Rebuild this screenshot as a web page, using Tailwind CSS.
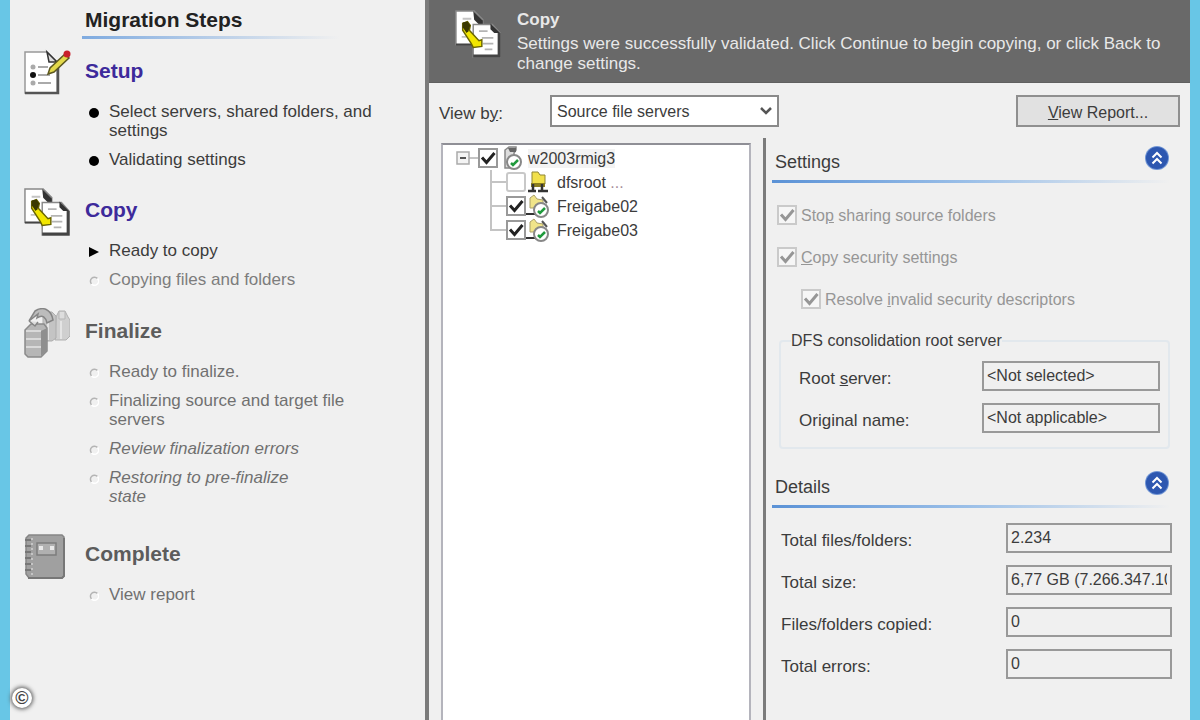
<!DOCTYPE html>
<html lang="en">
<head>
    <meta charset="UTF-8">
    <meta name="viewport" content="width=device-width, initial-scale=1.0">
    <title>File Server Migration - Copy</title>
    <script src="https://cdn.jsdelivr.net/npm/@tailwindcss/browser@4"></script>
</head>
<body class="min-h-screen flex bg-[#f0f0f0] border-x-[10px] border-[#68c6e6] font-['Liberation_Sans',Arial,sans-serif] text-[17px] leading-[19px] text-[#3c3c3c]">
    <!-- Shared icons -->
    <svg class="hidden">
        <symbol id="copyIcon" viewBox="0 0 48 50">
            <path d="M1 1h19l9 9v26H1z" fill="#fff" stroke="#888" stroke-width="1.500"/>
            <path d="M1 36h20" stroke="#444" stroke-width="2"/>
            <path d="M19 1l10 10v4h-4l-5-5z" fill="#333"/>
            <path d="M8 9h9M7 28h5M20 18h5" stroke="#c4c4c4" stroke-width="2"/>
            <path d="M19 15h20l8 9v25H19z" fill="#fff" stroke="#888" stroke-width="1.500"/>
            <path d="M19 48h27V24" fill="none" stroke="#444" stroke-width="3"/>
            <path d="M37 14l10 10h-6l-4-4z" fill="#333"/>
            <path d="M25 22h9M28 29h12M29 35h11M31 41h8" stroke="#b4b4b4" stroke-width="2"/>
            <path d="M8 14l5-2 3 4-1 5 10 11 3-1v7l-9 1-2-4L8 21z" fill="#f2e600" stroke="#6a6500" stroke-width="1.500"/>
            <path d="M8 13l5-1 3 4-2 6-2 2-4-6z" fill="#3a3800"/>
        </symbol>
        <symbol id="shareIcon" viewBox="0 0 24 24">
            <path d="M4 4l4-3 3 4 6 1v8H4z" fill="#f0e48a" stroke="#aaa06a"/>
            <path d="M0 20h10" stroke="#333" stroke-width="2"/>
            <path d="M16 3l5 6" stroke="#555" stroke-width="2"/>
            <circle cx="15" cy="16" r="7" fill="#fff" stroke="#888" stroke-width="2"/>
            <path d="M12 17l2 2 5-5" fill="none" stroke="#1f9a3c" stroke-width="2.500"/>
        </symbol>
        <symbol id="collapseIcon" viewBox="0 0 26 26">
            <circle cx="13" cy="13" r="12" fill="#6f94d4"/>
            <circle cx="13" cy="13" r="11" fill="#2d57b0"/>
            <path d="M8.500 12.500l4.500-4.500 4.500 4.500M8.500 18.500l4.500-4.500 4.500 4.500" fill="none" stroke="#fff" stroke-width="2"/>
        </symbol>
        <symbol id="check" viewBox="0 0 20 20">
            <path d="M4 9.500l4.500 5L16.500 5" fill="none" stroke="currentColor" stroke-width="3"/>
        </symbol>
        <symbol id="pending" viewBox="0 0 10 10">
            <path d="M8.500 2.500a4 4 0 1 0-6 5.500" fill="none" stroke="#b4b4b4" stroke-width="1.500"/>
            <path d="M8.500 2.500a4 4 0 0 1-6 5.500" fill="none" stroke="#fff" stroke-width="1.500"/>
        </symbol>
        <symbol id="done" viewBox="0 0 10 10">
            <circle cx="5" cy="5" r="5" fill="#000"/>
        </symbol>
    </svg>

    <!-- Migration steps -->
    <aside class="w-[415px] shrink-0 pl-[14px] pt-2">
        <div class="ml-[58px] mr-10">
            <h1 class="pl-[3px] text-[21px] leading-[24px] font-bold text-[#222]">Migration Steps</h1>
            <div class="mt-1 h-[3px] bg-linear-to-r from-[#7fabe0] to-transparent to-85%"></div>
        </div>

        <section class="mt-[9px]">
            <div class="flex items-center h-[46px]">
                <svg class="w-[48px] h-[48px] mr-[13px] mt-1" viewBox="0 0 48 48">
                    <path d="M1 3h22l10 10v31H1z" fill="#fff" stroke="#999" stroke-width="1.5"/>
                    <path d="M1 44h33V13" fill="none" stroke="#555" stroke-width="2.500"/>
                    <path d="M23 3l10 10h-8z" fill="#ddd" stroke="#333" stroke-width="1.500"/>
                    <path d="M14 18h10M14 26h12M14 34h13" stroke="#aaa" stroke-width="2"/>
                    <circle cx="9" cy="18" r="2.500" fill="#aaa"/>
                    <circle cx="9" cy="26" r="3" fill="#111"/>
                    <circle cx="9" cy="34" r="2.500" fill="#aaa"/>
                    <path d="M24 25l2-6L41 5l4 4-15 14z" fill="#e3d94a" stroke="#5c5720" stroke-width="1.500"/>
                    <circle cx="43" cy="5" r="3.500" fill="#c8202c"/>
                </svg>
                <h2 class="text-[21px] leading-[24px] font-bold text-[#3d2a9b]">Setup</h2>
            </div>
            <ul class="mt-2 ml-[65px] flex flex-col gap-[10px]">
                <li class="flex"><svg class="w-[10px] h-[10px] mt-[6px] mr-[10px] shrink-0"><use href="#done"/></svg>Select servers, shared folders, and<br>settings</li>
                <li class="flex"><svg class="w-[10px] h-[10px] mt-[6px] mr-[10px] shrink-0"><use href="#done"/></svg>Validating settings</li>
            </ul>
        </section>

        <section class="mt-[18px]">
            <div class="flex items-center h-[46px]">
                <svg class="w-[46px] h-[48px] mr-[15px] mt-1"><use href="#copyIcon"/></svg>
                <h2 class="text-[21px] leading-[24px] font-bold text-[#3d2a9b]">Copy</h2>
            </div>
            <ul class="mt-2 ml-[65px] flex flex-col gap-[10px]">
                <li class="flex"><svg class="w-[10px] h-[10px] mt-[6px] mr-[10px] shrink-0" viewBox="0 0 10 10"><path d="M0 0l10 5-10 5z" fill="#000"/></svg>Ready to copy</li>
                <li class="flex text-[#7d7d7d]"><svg class="w-[10px] h-[10px] mt-[6px] mr-[10px] shrink-0"><use href="#pending"/></svg>Copying files and folders</li>
            </ul>
        </section>

        <section class="mt-[19px]">
            <div class="flex items-center h-[46px]">
                <svg class="w-[46px] h-[50px] mr-[15px] mt-1" viewBox="0 0 46 50">
                    <path d="M32 9l3-6h6l3 6 2 3v16l-4 4H31z" fill="#cfcfcf" stroke="#b0b0b0"/>
                    <path d="M35 4v7h6V4" fill="#ddd" stroke="#b5b5b5"/>
                    <path d="M19 8l4-4h5l4 4v22l-4 3h-9z" fill="#c4c4c4" stroke="#adadad"/>
                    <path d="M24 12v20M37 13v18" stroke="#e4e4e4" stroke-width="2"/>
                    <path d="M1 22l6-6h13l3 4v23l-6 6H4l-3-3z" fill="#b6b6b6" stroke="#8b8b8b" stroke-width="1.500"/>
                    <path d="M17 23v25l6-5V20z" fill="#8f8f8f"/>
                    <path d="M2 23h15M2 31h15M2 39h15" stroke="#d9d9d9" stroke-width="2"/>
                    <path d="M5 13l9-7-1 4c6-4 9 0 10 5l6-3C27 1 19-2 11 3z" fill="#bcbcbc" stroke="#858585" stroke-width="1.500"/>
                    <path d="M5 13l6 5 3-4" fill="#ddd" stroke="#858585" stroke-width="1.500"/>
                </svg>
                <h2 class="text-[21px] leading-[24px] font-bold text-[#5c5c5c]">Finalize</h2>
            </div>
            <ul class="mt-2 ml-[65px] flex flex-col gap-[10px] text-[#707070]">
                <li class="flex"><svg class="w-[10px] h-[10px] mt-[6px] mr-[10px] shrink-0"><use href="#pending"/></svg>Ready to finalize.</li>
                <li class="flex"><svg class="w-[10px] h-[10px] mt-[6px] mr-[10px] shrink-0"><use href="#pending"/></svg>Finalizing source and target file<br>servers</li>
                <li class="flex italic"><svg class="w-[10px] h-[10px] mt-[6px] mr-[10px] shrink-0"><use href="#pending"/></svg>Review finalization errors</li>
                <li class="flex italic"><svg class="w-[10px] h-[10px] mt-[6px] mr-[10px] shrink-0"><use href="#pending"/></svg>Restoring to pre-finalize<br>state</li>
            </ul>
        </section>

        <section class="mt-[25px]">
            <div class="flex items-center h-[46px]">
                <svg class="w-[42px] h-[46px] mr-[19px] mt-[6px]" viewBox="0 0 42 46">
                    <path d="M5 1h33l2 2v39l-2 2H5l-3-4V4z" fill="#a0a0a0" stroke="#858585" stroke-width="1.500"/>
                    <path d="M4 44h34l2-2V4" fill="none" stroke="#777" stroke-width="2"/>
                    <rect x="13" y="9" width="19" height="12" fill="#b0b0b0" stroke="#7c7c7c" stroke-width="1.500"/>
                    <path d="M15 14h4M26 14h4" stroke="#e9e9e9" stroke-width="4"/>
                    <path d="M8 4v38" stroke="#c5c5c5" stroke-width="2" stroke-dasharray="2 3"/>
                    <path d="M1 6h6M1 12h6M1 18h6M1 24h6M1 30h6M1 36h6" stroke="#777" stroke-width="2"/>
                </svg>
                <h2 class="text-[21px] leading-[24px] font-bold text-[#5c5c5c]">Complete</h2>
            </div>
            <ul class="mt-2 ml-[65px] text-[#707070]">
                <li class="flex"><svg class="w-[10px] h-[10px] mt-[6px] mr-[10px] shrink-0"><use href="#pending"/></svg>View report</li>
            </ul>
        </section>
    </aside>

    <main class="flex-1 min-w-0 flex flex-col border-l-4 border-[#7b7b7b]">
        <header class="flex bg-[#696969] text-[#e8e8e8] pt-[10px] pb-2 pl-[26px] pr-4 border-b border-[#606060]">
            <svg class="w-[46px] h-[48px] mr-4 shrink-0"><use href="#copyIcon"/></svg>
            <div class="leading-[20px]">
                <h2 class="font-bold">Copy</h2>
                <p class="mt-1">Settings were successfully validated. Click Continue to begin copying, or click Back to change settings.</p>
            </div>
        </header>

        <div class="flex items-center pt-3 pl-[10px] pr-[10px]">
            <label for="viewBy" class="w-[111px] pt-1">View b<u>y</u>:</label>
            <div class="grid items-center">
                <select id="viewBy" class="col-start-1 row-start-1 appearance-none w-[229px] h-8 pl-[5px] text-[16px] bg-white border-2 border-[#8a8a8a]">
                    <option>Source file servers</option>
                    <option>Target file servers</option>
                </select>
                <svg class="col-start-1 row-start-1 justify-self-end w-3 h-3 mr-[7px] pointer-events-none" viewBox="0 0 12 12"><path d="M1 3l5 5 5-5" fill="none" stroke="#555" stroke-width="2.500"/></svg>
            </div>
            <button class="ml-auto w-[164px] h-8 pt-[2px] text-[16px] bg-[#e1e1e1] border-2 border-[#8f8f8f]"><u>V</u>iew Report...</button>
        </div>

        <div class="flex-1 flex pt-[11px] pl-3">
            <!-- Server tree -->
            <div class="mt-[5px] mr-3 pt-px w-[310px] shrink-0 bg-white border-2 border-b-0 border-[#b4b4bc] border-t-[#8f8f96] text-[16px]">
                <div class="flex items-center h-6 pl-3">
                    <button aria-label="Collapse w2003rmig3" class="shrink-0"><svg class="block w-[23px] h-6" viewBox="0 0 23 24"><path d="M14 12h9" stroke="#c4c4c4" stroke-width="2"/><rect x="2" y="6" width="12" height="12" fill="#f4f4f4" stroke="#aaa" stroke-width="1.500"/><path d="M5 12h6" stroke="#555" stroke-width="2"/></svg></button>
                    <span class="grid text-[#222]">
                        <input id="server" type="checkbox" checked class="peer col-start-1 row-start-1 appearance-none w-5 h-5 bg-white border-2 border-[#999]">
                        <svg class="col-start-1 row-start-1 w-5 h-5 hidden peer-checked:block pointer-events-none"><use href="#check"/></svg>
                    </span>
                    <svg class="w-[22px] h-[24px] ml-1 mr-1" viewBox="0 0 22 24">
                        <path d="M3 4l4-3h7v3l-2 3v13l-4 2H3z" fill="#ddd" stroke="#888" stroke-width="1.500"/>
                        <path d="M6 2h8v4H8z" fill="#666"/>
                        <circle cx="12" cy="16" r="7" fill="#fff" stroke="#888" stroke-width="2"/>
                        <path d="M9 17l2 2 5-5" fill="none" stroke="#1f9a3c" stroke-width="2.500"/>
                    </svg>
                    <label for="server" class="bg-[#f3f3f3]">w2003rmig3</label>
                </div>
                <ul class="pl-[46px]">
                    <li class="flex items-center h-6">
                        <svg class="w-[17px] h-6" viewBox="0 0 17 24"><path d="M2 0v24M2 12h15" stroke="#c4c4c4" stroke-width="2"/></svg>
                        <input id="dfsroot" type="checkbox" class="appearance-none w-5 h-5 bg-white border-2 border-[#c8c8c8] rounded-[3px]">
                        <svg class="w-[24px] h-6 mr-[7px]" viewBox="0 0 24 24">
                            <path d="M6 2h6l2 3h5v9H6z" fill="#f1e04c" stroke="#8f8534"/>
                            <path d="M5 13h14v4H5z" fill="#8b7d1f"/>
                            <path d="M7 14v6M16 14v6M2 21h8M12 21h10" stroke="#333" stroke-width="2.500"/>
                        </svg>
                        <label for="dfsroot">dfsroot <span class="text-[#a88f9b]">...</span></label>
                    </li>
                    <li class="flex items-center h-6">
                        <svg class="w-[17px] h-6" viewBox="0 0 17 24"><path d="M2 0v24M2 12h15" stroke="#c4c4c4" stroke-width="2"/></svg>
                        <span class="grid text-[#222]">
                            <input id="freigabe02" type="checkbox" checked class="peer col-start-1 row-start-1 appearance-none w-5 h-5 bg-white border-2 border-[#999]">
                            <svg class="col-start-1 row-start-1 w-5 h-5 hidden peer-checked:block pointer-events-none"><use href="#check"/></svg>
                        </span>
                        <svg class="w-[24px] h-6 mr-[7px]"><use href="#shareIcon"/></svg>
                        <label for="freigabe02">Freigabe02</label>
                    </li>
                    <li class="flex items-center h-6">
                        <svg class="w-[17px] h-6" viewBox="0 0 17 24"><path d="M2 0v13M1 12h16" stroke="#c4c4c4" stroke-width="2"/></svg>
                        <span class="grid text-[#222]">
                            <input id="freigabe03" type="checkbox" checked class="peer col-start-1 row-start-1 appearance-none w-5 h-5 bg-white border-2 border-[#999]">
                            <svg class="col-start-1 row-start-1 w-5 h-5 hidden peer-checked:block pointer-events-none"><use href="#check"/></svg>
                        </span>
                        <svg class="w-[24px] h-6 mr-[7px]"><use href="#shareIcon"/></svg>
                        <label for="freigabe03">Freigabe03</label>
                    </li>
                </ul>
            </div>

            <!-- Settings and details -->
            <div class="flex-1 min-w-0 border-l-[3px] border-[#7b7b7b] pl-[6px]">
                <div class="flex items-center justify-between pl-[3px] pr-5 pt-[6px]">
                    <h3 class="pt-2 text-[18px] leading-[20px]">Settings</h3>
                    <button aria-label="Collapse settings"><svg class="block w-[26px] h-[26px]"><use href="#collapseIcon"/></svg></button>
                </div>
                <div class="mt-2 mr-5 h-[3px] bg-linear-to-r from-[#5b92d6] via-[#9cc0e8] to-transparent"></div>

                <div class="mt-[22px] pl-[5px] flex flex-col gap-[22px] text-[16px] text-[#969696]">
                    <div class="flex items-center h-5">
                        <span class="grid">
                            <input id="stopSharing" type="checkbox" checked disabled class="peer col-start-1 row-start-1 appearance-none w-5 h-5 bg-[#f6f6f6] border-2 border-[#cacaca]">
                            <svg class="col-start-1 row-start-1 w-5 h-5 hidden peer-checked:block"><use href="#check"/></svg>
                        </span>
                        <label for="stopSharing" class="ml-1">Sto<u>p</u> sharing source folders</label>
                    </div>
                    <div class="flex items-center h-5">
                        <span class="grid">
                            <input id="copySecurity" type="checkbox" checked disabled class="peer col-start-1 row-start-1 appearance-none w-5 h-5 bg-[#f6f6f6] border-2 border-[#cacaca]">
                            <svg class="col-start-1 row-start-1 w-5 h-5 hidden peer-checked:block"><use href="#check"/></svg>
                        </span>
                        <label for="copySecurity" class="ml-1"><u>C</u>opy security settings</label>
                    </div>
                    <div class="flex items-center h-5 ml-6">
                        <span class="grid">
                            <input id="resolveInvalid" type="checkbox" checked disabled class="peer col-start-1 row-start-1 appearance-none w-5 h-5 bg-[#f6f6f6] border-2 border-[#cacaca]">
                            <svg class="col-start-1 row-start-1 w-5 h-5 hidden peer-checked:block"><use href="#check"/></svg>
                        </span>
                        <label for="resolveInvalid" class="ml-1">Resolve <u>i</u>nvalid security descriptors</label>
                    </div>
                </div>

                <fieldset class="mt-[22px] ml-[7px] mr-5 border-2 border-[#e2e8ed] rounded-[4px] pl-[18px] pr-2 pb-[14px]">
                    <legend class="-ml-2 text-[16px]">DFS consolidation root server</legend>
                    <div class="mt-[11px] flex flex-col gap-3">
                        <div class="flex items-center justify-between">
                            <label for="rootServer" class="pt-1">Root <u>s</u>erver:</label>
                            <input id="rootServer" type="text" readonly value="&lt;Not selected&gt;" class="w-[178px] h-[30px] px-[3px] text-[16px] border-2 border-[#999]">
                        </div>
                        <div class="flex items-center justify-between">
                            <label for="originalName" class="pt-1">Ori<u>g</u>inal name:</label>
                            <input id="originalName" type="text" readonly value="&lt;Not applicable&gt;" class="w-[178px] h-[30px] px-[3px] text-[16px] border-2 border-[#999]">
                        </div>
                    </div>
                </fieldset>

                <div class="flex items-center justify-between pl-[3px] pr-5 pt-5">
                    <h3 class="pt-2 text-[18px] leading-[20px]">Details</h3>
                    <button aria-label="Collapse details"><svg class="block w-[26px] h-[26px]"><use href="#collapseIcon"/></svg></button>
                </div>
                <div class="mt-2 mr-5 h-[3px] bg-linear-to-r from-[#5b92d6] via-[#9cc0e8] to-transparent"></div>

                <div class="mt-[15px] pl-[9px] pr-[18px] flex flex-col gap-3">
                    <div class="flex items-center justify-between">
                        <label for="totalFiles" class="pt-1">Total files/folders:</label>
                        <input id="totalFiles" type="text" readonly value="2.234" class="w-[166px] h-[30px] px-[3px] text-[16px] border-2 border-[#999]">
                    </div>
                    <div class="flex items-center justify-between">
                        <label for="totalSize" class="pt-1">Total size:</label>
                        <input id="totalSize" type="text" readonly value="6,77 GB (7.266.347.108 Bytes)" class="w-[166px] h-[30px] px-[3px] text-[16px] border-2 border-[#999]">
                    </div>
                    <div class="flex items-center justify-between">
                        <label for="filesCopied" class="pt-1">Files/folders copied:</label>
                        <input id="filesCopied" type="text" readonly value="0" class="w-[166px] h-[30px] px-[3px] text-[16px] border-2 border-[#999]">
                    </div>
                    <div class="flex items-center justify-between">
                        <label for="totalErrors" class="pt-1">Total errors:</label>
                        <input id="totalErrors" type="text" readonly value="0" class="w-[166px] h-[30px] px-[3px] text-[16px] border-2 border-[#999]">
                    </div>
                </div>
            </div>
        </div>
    </main>

    <span class="absolute left-3 bottom-3 w-5 h-5 rounded-full bg-white shadow-[0_0_4px_1px_#555] text-[18px] leading-[20px] text-center font-bold text-[#444]">©</span>
</body>
</html>
